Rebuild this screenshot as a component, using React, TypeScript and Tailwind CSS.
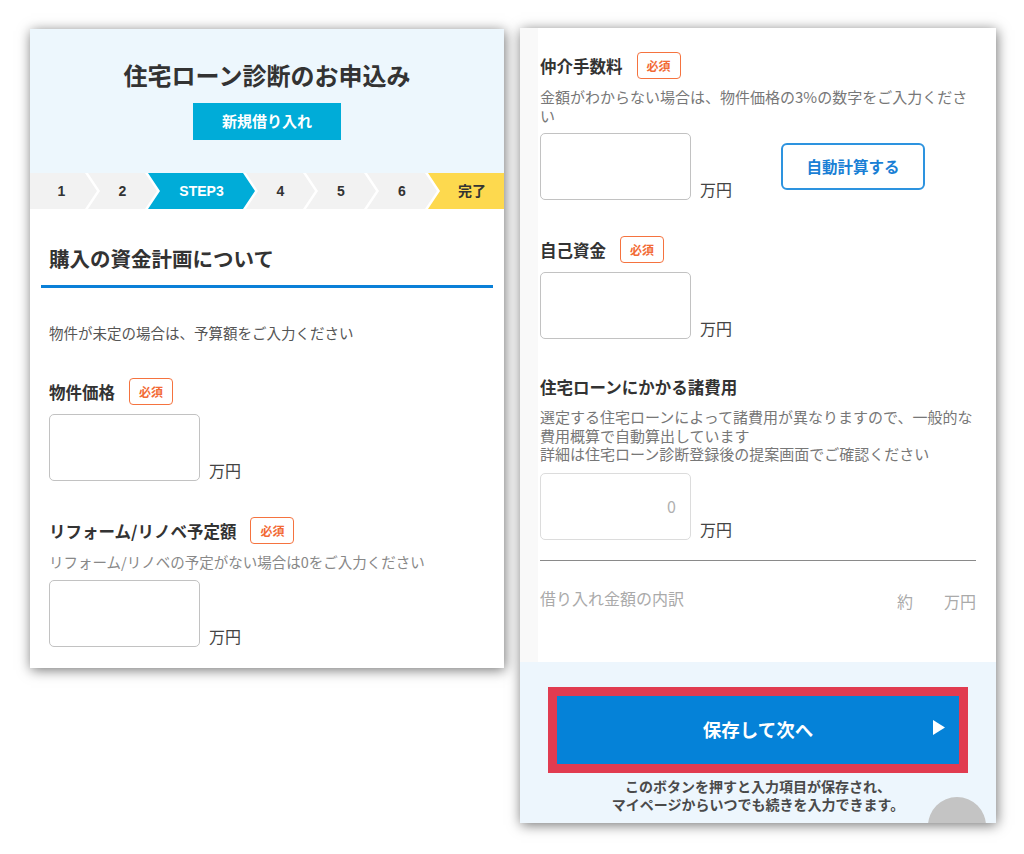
const steps = [
  { label: '1', cls: 'w-[67px] pr-[4px] bg-[#f2f2f2] text-[#333] [clip-path:polygon(0_0,calc(100%_-_12px)_0,100%_50%,calc(100%_-_12px)_100%,0_100%)]' },
  { label: '2', cls: 'w-[69px] -ml-[9px] bg-[#f2f2f2] text-[#333] [clip-path:polygon(0_0,calc(100%_-_12px)_0,100%_50%,calc(100%_-_12px)_100%,0_100%,12px_50%)]' },
  { label: 'STEP3', cls: 'w-[107px] -ml-[9px] bg-[#00acd8] text-white [clip-path:polygon(0_0,calc(100%_-_12px)_0,100%_50%,calc(100%_-_12px)_100%,0_100%,12px_50%)]' },
  { label: '4', cls: 'w-[69px] -ml-[9px] bg-[#f2f2f2] text-[#333] [clip-path:polygon(0_0,calc(100%_-_12px)_0,100%_50%,calc(100%_-_12px)_100%,0_100%,12px_50%)]' },
  { label: '5', cls: 'w-[70px] -ml-[9px] bg-[#f2f2f2] text-[#333] [clip-path:polygon(0_0,calc(100%_-_12px)_0,100%_50%,calc(100%_-_12px)_100%,0_100%,12px_50%)]' },
  { label: '6', cls: 'w-[70px] -ml-[9px] bg-[#f2f2f2] text-[#333] [clip-path:polygon(0_0,calc(100%_-_12px)_0,100%_50%,calc(100%_-_12px)_100%,0_100%,12px_50%)]' },
  { label: '完了', cls: 'w-[76px] -ml-[9px] pl-[12px] bg-[#fdd94e] text-[#333] [clip-path:polygon(0_0,100%_0,100%_100%,0_100%,12px_50%)]' },
];

function Badge() {
  return (
    <span className="flex items-center justify-center w-[44px] h-[27px] border-[1.5px] border-[#f5733f] rounded-[4px] text-[12px] font-bold text-[#f26a35]">
      必須
    </span>
  );
}

function Label({ text, required = true }: { text: string; required?: boolean }) {
  return (
    <div className="flex items-center h-[27px] gap-[14px]">
      <span className="text-[16.5px] font-bold text-[#333] leading-[24px]">{text}</span>
      {required && <Badge />}
    </div>
  );
}

function AmountInput({ placeholder, disabled }: { placeholder?: string; disabled?: boolean }) {
  return (
    <div className="flex items-end">
      <input
        type="text"
        readOnly
        placeholder={placeholder}
        className={`w-[151px] h-[67px] rounded-[5px] bg-white text-right pr-[14px] text-[16px] placeholder:text-[#b0b0b0] outline-none ${
          disabled ? 'border border-[#dcdcdc]' : 'border border-[#c2c2c2]'
        }`}
      />
      <span className="ml-[9px] text-[16px] leading-[20px] text-[#444] pb-[1px]">万円</span>
    </div>
  );
}

function LeftPanel() {
  return (
    <div className="w-[474px] h-[639px] mt-[1px] bg-white shadow-[1px_2px_12px_rgba(0,0,0,0.55)] overflow-hidden">
      {/* Header */}
      <div className="h-[144px] bg-[#edf7fd] flex flex-col items-center pt-[30px]">
        <h1 className="text-[24px] leading-[32px] font-bold text-[#333]">住宅ローン診断のお申込み</h1>
        <button className="mt-[12px] w-[148px] h-[37px] bg-[#00acd8] text-white text-[15px] font-bold">
          新規借り入れ
        </button>
      </div>

      {/* Step bar */}
      <div className="flex h-[36px] bg-white">
        {steps.map((s) => (
          <div
            key={s.label}
            className={`h-full shrink-0 flex items-center justify-center font-bold text-[14px] font-['Liberation_Sans','Noto_Sans_CJK_JP',sans-serif] ${s.cls}`}
          >
            {s.label}
          </div>
        ))}
      </div>

      {/* Section title */}
      <div className="mx-[11px] border-b-[3px] border-[#0a80d8] pl-[8px] pt-[36px] pb-[14px]">
        <h2 className="text-[20.5px] leading-[26px] font-bold text-[#333]">購入の資金計画について</h2>
      </div>

      <div className="px-[19px]">
        <p className="mt-[35px] text-[14.5px] leading-[20px] text-[#555]">物件が未定の場合は、予算額をご入力ください</p>

        <div className="mt-[35px]">
          <Label text="物件価格" />
        </div>
        <div className="mt-[9px]">
          <AmountInput />
        </div>

        <div className="mt-[36px]">
          <Label text="リフォーム/リノベ予定額" />
        </div>
        <p className="mt-[8px] text-[14.5px] leading-[20px] text-[#888]">リフォーム/リノベの予定がない場合は0をご入力ください</p>
        <div className="mt-[8px]">
          <AmountInput />
        </div>
      </div>
    </div>
  );
}

function RightPanel() {
  return (
    <div className="w-[476px] h-[795px] bg-white shadow-[1px_2px_12px_rgba(0,0,0,0.55)] overflow-hidden flex flex-col">
      <div className="h-[634px] flex">
        <div className="w-[18px] bg-[#f9f9f9]" />
        <div className="flex-1 pl-[2px] pr-[20px] pt-[24px] bg-white">
          <Label text="仲介手数料" />
          <p className="mt-[9px] text-[15px] leading-[18.5px] text-[#777]">
            金額がわからない場合は、物件価格の3%の数字をご入力ください
          </p>
          <div className="mt-[8px] flex items-center">
            <AmountInput />
            <button className="ml-[49px] w-[144px] h-[47px] border-2 border-[#2d93df] rounded-[6px] text-[#1a7fd5] text-[15.5px] font-bold">
              自動計算する
            </button>
          </div>

          <div className="mt-[36px]">
            <Label text="自己資金" />
          </div>
          <div className="mt-[9px]">
            <AmountInput />
          </div>

          <div className="mt-[34px]">
            <Label text="住宅ローンにかかる諸費用" required={false} />
          </div>
          <p className="mt-[8px] text-[15px] leading-[18.5px] text-[#777]">
            選定する住宅ローンによって諸費用が異なりますので、一般的な費用概算で自動算出しています
            <br />
            詳細は住宅ローン診断登録後の提案画面でご確認ください
          </p>
          <div className="mt-[9px]">
            <AmountInput placeholder="0" disabled />
          </div>

          <div className="mt-[20px] border-t-[1.5px] border-[#8a8a8a]" />
          <div className="mt-[26px] flex items-end justify-between text-[16px] text-[#aaa]">
            <span className="leading-[22px]">借り入れ金額の内訳</span>
            <div className="flex gap-[31px] leading-[22px] -mb-[3px]">
              <span>約</span>
              <span>万円</span>
            </div>
          </div>
        </div>
      </div>

      {/* Footer */}
      <div className="relative flex-1 bg-[#edf6fd] px-[28px] pt-[25px]">
        <div className="bg-[#e13b50] p-[9px]">
          <button className="relative w-full h-[68px] bg-[#0582d8] flex items-center justify-center text-white text-[18.5px] font-bold">
            保存して次へ
            <svg className="absolute right-[14px] top-[24px]" width="12" height="15" viewBox="0 0 12 15">
              <path d="M0 0 L12 7.5 L0 15 Z" fill="white" />
            </svg>
          </button>
        </div>
        <p className="mt-[4px] text-center text-[14px] leading-[18px] font-bold text-[#4a4a4a]">
          このボタンを押すと入力項目が保存され、
          <br />
          マイページからいつでも続きを入力できます。
        </p>
        <div className="absolute left-[408px] top-[135px] w-[58px] h-[58px] rounded-full bg-[#c4c4c4]" />
      </div>
    </div>
  );
}

export default function App() {
  return (
    <div className="w-[1024px] h-[854px] bg-white flex items-start gap-[16px] pl-[30px] pt-[28px] font-['Noto_Sans_CJK_JP','Noto_Sans',sans-serif]">
      <LeftPanel />
      <RightPanel />
    </div>
  );
}
